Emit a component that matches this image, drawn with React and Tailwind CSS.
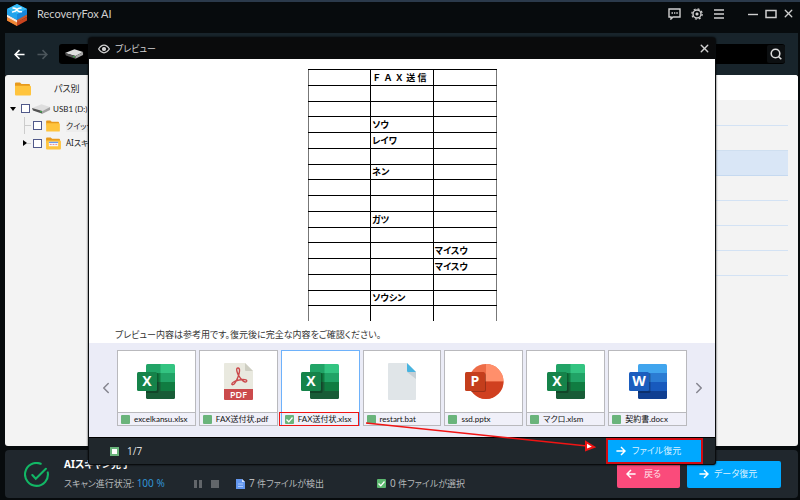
import React from "react";
import { ChevronLeft, ChevronRight, X } from "lucide-react";

function Logo() {
  return (
    <svg viewBox="0 0 22 22" className="size-[22px] shrink-0" aria-hidden="true">
      <path d="M1 13 L11 18 L21 13 V16.500 L11 22 L1 16.500Z" fill="#c9441f" />
      <path d="M1 13 L11 18 V22 L1 16.500Z" fill="#f08a35" />
      <path d="M1 10 L11 15 L21 10 V13 L11 18.500 L1 13Z" fill="#c8562c" />
      <path d="M1 10 L11 15 V18.500 L1 13Z" fill="#fbe9dc" />
      <path d="M1 5 L11 0 L21 5 V10.500 L11 16 L1 10.500Z" fill="#1787dc" />
      <path d="M1 5 L11 0 L21 5 L11 10Z" fill="#35baf5" />
      <path d="M1 5 L11 10 V16 L1 10.500Z" fill="#22a3ec" />
      <path d="M7 4 Q10.500 4.500 11 5.700 Q12 4 15 4 M6.500 8 Q10 7.500 11 5.700 Q12 8 15.500 7.800" stroke="#fff" strokeWidth="1.500" fill="none" strokeLinecap="round" />
    </svg>
  );
}

function Folder({ app }) {
  return (
    <svg viewBox="0 0 16 14" className={app ? "h-[13px] w-[15px] shrink-0" : "h-full w-full"} aria-hidden="true">
      <path d="M0 1.500 Q0 .5 1 .5 H5 L6.500 2 H14 Q15 2 15 3 V6 H0Z" fill="#e79a1c" />
      <path d="M0 3.800 H15 Q16 3.800 16 4.800 V12.500 Q16 13.500 15 13.500 H1 Q0 13.500 0 12.500Z" fill="#ffc43d" />
      {app && <g><path d="M3 5 H13 V10 H3Z" fill="#f4f6fb" /><path d="M3 5 H13 V6.500 H3Z" fill="#6d9bea" /><path d="M4 8 H6 M7 8 H9 M10 8 H12" stroke="#e58585" /></g>}
    </svg>
  );
}

function Drive() {
  return (
    <svg viewBox="0 0 20 10" className="h-[10px] w-[19px] shrink-0" aria-hidden="true">
      <path d="M0 4 L10 0 L19 3 L11 7Z" fill="#dedede" />
      <path d="M0 4 L11 7 V10 L1 6.500Z" fill="#545454" />
      <path d="M11 7 L19 3 V6 L11 10Z" fill="#a4a4a4" />
      <circle cx="9.500" cy="8" r=".8" fill="#36d444" />
    </svg>
  );
}

function Arrow({ left, className }) {
  return (
    <svg viewBox="0 0 12 12" className={className} fill="none" stroke="currentColor" strokeWidth="1.700" aria-hidden="true">
      <path d={left ? "M11.500 6 H1.500 M6 1.200 L1.200 6 L6 10.800" : "M.5 6 H10.500 M6 1.200 L10.800 6 L6 10.800"} />
    </svg>
  );
}

function OfficeIcon({ kind }) {
  if (kind === "pdf")
    return (
      <svg viewBox="0 0 40 40" className="size-10" aria-hidden="true">
        <path d="M6 2 Q6 1 7 1 H27 L35 9 V28 H6Z" fill="#e9e9df" />
        <path d="M27 1 L35 9 H28 Q27 9 27 8Z" fill="#cecec2" />
        <path d="M6 27 H35 V37 Q35 38 34 38 H7 Q6 38 6 37Z" fill="#cb4a4c" />
        <path d="M20 6 C17.500 6 19 11 21 14 C23 18 27 21 28.500 19.500 C30 17.500 25 17 21 18 C17 18.800 13 21 14 22.500 C15.500 24 18.500 19 20 15 C21.500 11 22.500 6 20 6Z" fill="none" stroke="#cb4a4c" strokeWidth="1.400" />
        <text x="20.500" y="35.500" textAnchor="middle" fontSize="9" fontWeight="600" fill="#fff" className="font-['Open_Sans',sans-serif]">PDF</text>
      </svg>
    );
  if (kind === "bat")
    return (
      <svg viewBox="0 0 40 40" className="size-10" aria-hidden="true">
        <path d="M6 2 Q6 1 7 1 H25 L34 10 V37 Q34 38 33 38 H7 Q6 38 6 37Z" fill="#e0e5e8" />
        <path d="M25 10 L34 17 V10Z" fill="#c5cfd5" />
        <path d="M25 1 L34 10 H26 Q25 10 25 9Z" fill="#48b4e0" />
      </svg>
    );
  if (kind === "P")
    return (
      <svg viewBox="0 0 40 40" className="size-10" aria-hidden="true">
        <circle cx="22" cy="19.500" r="17.500" fill="#ed6c47" />
        <path d="M22 2 A17.500 17.500 0 0 1 39.500 19.500 H22Z" fill="#ff8f6b" />
        <path d="M4.500 19.500 A17.500 17.500 0 0 0 39.500 19.500Z" fill="#d04020" />
        <path d="M5 11 H20 Q22 11 22 13 V28 Q22 30 20 30 H7Z" fill="#000" opacity=".25" />
        <rect x="1" y="10" width="20" height="19" rx="1.500" fill="#c43e1c" />
        <text x="11" y="24" textAnchor="middle" fontSize="14" fontWeight="700" fill="#fff" className="font-['Open_Sans',sans-serif]">P</text>
      </svg>
    );
  const word = kind === "W";
  const c = word
    ? ["#41a5ee", "#41a5ee", "#2b7cd3", "#2b7cd3", "#185abd", "#185abd", "#103f91", "#103f91", "#1b5dbe"]
    : ["#21a366", "#33c481", "#107c41", "#21a366", "#185c37", "#107c41", "#185c37", "#185c37", "#15834a"];
  return (
    <svg viewBox="0 0 40 40" className="size-10" aria-hidden="true">
      <clipPath id={"sheet" + kind}><rect x="10" y="2" width="29" height="35" rx="1.500" /></clipPath>
      <g clipPath={"url(#sheet" + kind + ")"}>
        {[0, 1, 2, 3].map((r) => (
          <g key={r}>
            <rect x="10" y={2 + r * 9} width="15" height="9" fill={c[r * 2]} />
            <rect x="24.500" y={2 + r * 9} width="15" height="9" fill={c[r * 2 + 1]} />
          </g>
        ))}
        <rect x="8" y="11" width="14.500" height="20" rx="1.500" fill="#000" opacity=".25" />
      </g>
      <rect x="1" y="10" width="20" height="19" rx="1.500" fill={c[8]} />
      <text x="11" y="24" textAnchor="middle" fontSize="14" fontWeight="700" fill="#fff" className="font-['Open_Sans',sans-serif]">{kind}</text>
    </svg>
  );
}

const files = [
  ["excelkansu.xlsx", "X"],
  ["FAX送付状.pdf", "pdf"],
  ["FAX送付状.xlsx", "X"],
  ["restart.bat", "bat"],
  ["ssd.pptx", "P"],
  ["マクロ.xlsm", "X"],
  ["契約書.docx", "W"],
];

const checkBox = "size-[9px] shrink-0 appearance-none rounded-[1px] bg-[#6ab47b]";

function FileCard({ name, kind, selected }) {
  return (
    <label className={"relative flex h-[76px] min-w-0 flex-1 flex-col border bg-white " + (selected ? "border-[#6eb2fb]" : "border-[#b9b9bd]")}>
      <span className="flex flex-1 items-center justify-center"><OfficeIcon kind={kind} /></span>
      <span className="flex h-[13px] items-center gap-1 border-t border-[#b9b9bd] bg-[#f0f0f9] pl-[3px] font-['Lato','Noto_Sans_CJK_JP',sans-serif] text-[8px] leading-[12px] text-[#111]">
        <span className="relative flex">
          <input type="checkbox" defaultChecked={selected} className={checkBox} />
          {selected && <svg viewBox="0 0 9 9" className="absolute inset-0 size-[9px]" aria-hidden="true"><path d="M1.500 4.500 L3.800 6.800 L7.500 2.500" fill="none" stroke="#fff" strokeWidth="1.300" /></svg>}
        </span>
        <span className="whitespace-nowrap">{name}</span>
      </span>
      {selected && <span className="pointer-events-none absolute -bottom-px -left-[3px] right-0 h-[14px] border border-[#f01414]" />}
    </label>
  );
}

const sheet = [
  ["", "Ｆ Ａ Ｘ 送 信", ""], ["", "", ""], ["", "", ""], ["", "ソウ", ""],
  ["", "レイワ", ""], ["", "", ""], ["", "ネン", ""], ["", "", ""],
  ["", "", ""], ["", "ガツ", ""], ["", "", ""], ["", "", "マイスウ"],
  ["", "", "マイスウ"], ["", "", ""], ["", "ソウシン", ""], ["", "", ""],
];

function Preview() {
  return (
    <section role="dialog" aria-label="プレビュー" className="absolute top-[35px] right-[84px] bottom-[35px] left-[88px] flex flex-col rounded-t-[4px] rounded-b-[3px] border border-[#090c0e] bg-[#20272c] shadow-[0_0_2px_#000]">
      <header className="flex h-[21px] shrink-0 items-center bg-[#0a0b0c] pr-[4px] pl-[9px] text-[#d2d2d2]">
        <svg viewBox="0 0 12 10" className="h-[10px] w-[12px]" fill="none" stroke="currentColor" strokeWidth="1.200" aria-hidden="true">
          <path d="M.6 5 Q3 1.200 6 1.200 T11.400 5 Q9 8.800 6 8.800 T.6 5Z" /><circle cx="6" cy="5" r="1.500" fill="currentColor" />
        </svg>
        <h2 className="ml-[5px] text-[9px] leading-[12px]">プレビュー</h2>
        <button aria-label="閉じる" className="ml-auto"><X size={13} strokeWidth={2.500} /></button>
      </header>
      <div className="flex min-h-0 flex-1 flex-col bg-white">
        <div className="flex flex-1 justify-center pt-[10px]">
          <table className="h-[252px] w-[189px] table-fixed border-collapse self-start border-x border-[#777] text-[9px] leading-[11px] font-bold text-black">
            <tbody>
              {sheet.map((row, i) => (
                <tr key={i} className="border-t border-black">
                  {row.map((cell, j) => (
                    <td key={j} className={"p-0 pl-px whitespace-nowrap " + (j ? "border-l border-black " : "") + (i ? "" : "[font-feature-settings:normal]")}>
                      <div className="h-[11px]">{cell}</div>
                    </td>
                  ))}
                </tr>
              ))}
            </tbody>
          </table>
        </div>
        <p className="mb-[1px] pl-[26px] text-[9px] leading-[14px] text-[#333]">プレビュー内容は参考用です。復元後に完全な内容をご確認ください。</p>
      </div>
      <div className="flex h-[94px] shrink-0 items-center bg-[#ebecf7] pb-[4px]">
        <button aria-label="前へ" className="flex w-[28px] items-center justify-center pl-[5px] text-[#85858f]"><ChevronLeft size={18} strokeWidth={2} /></button>
        <div className="flex min-w-0 flex-1 gap-[3px]">
          {files.map(([name, kind], i) => <FileCard key={i} name={name} kind={kind} selected={i === 2} />)}
        </div>
        <button aria-label="次へ" className="flex w-[28px] items-center justify-center pr-[5px] text-[#85858f]"><ChevronRight size={18} strokeWidth={2} /></button>
      </div>
      <footer className="flex h-[27px] shrink-0 items-center border-t border-black pr-[12px] pl-[21px]">
        <label className="flex items-center gap-2 text-[10px] leading-[12px] text-[#ddd]">
          <input type="checkbox" className="size-[9px] appearance-none border-2 border-[#6ab47b] bg-white" />1/7
        </label>
        <button className="ml-auto flex h-[26px] w-[97px] items-center gap-[6px] border-2 border-[#d20a12] bg-[#00a8ff] pl-[8px] text-[9px] leading-[12px] text-[#d9f1ff]">
          <Arrow className="size-[10px] text-white" />ファイル復元
        </button>
      </footer>
      <svg viewBox="0 0 232 32" className="pointer-events-none absolute bottom-[11px] left-[276px] h-[32px] w-[232px]" aria-hidden="true">
        <path d="M1 2 L222 25" stroke="#f01414" strokeWidth="1.500" />
        <path d="M221 21 L229 26 L221 29Z" fill="#fff" stroke="#f01414" strokeWidth="2" />
      </svg>
    </section>
  );
}

function TitleBar() {
  return (
    <header className="flex h-[31px] shrink-0 items-start pr-[5px] pl-[6px] text-[#cfcfcf]">
      <span className="pt-[2px]"><Logo /></span>
      <h1 className="ml-[9px] pt-[5px] font-['Lato',sans-serif] text-[11px] leading-[14px]">RecoveryFox AI</h1>
      <div className="ml-auto flex items-center pt-[5px]">
        <button aria-label="フィードバック">
          <svg viewBox="0 0 13 12" className="h-[12px] w-[13px]" fill="none" stroke="currentColor" strokeWidth="1.400" aria-hidden="true"><path d="M1 1 H12 V9 H5 L3 11 V9 H1Z" /><path d="M3.500 5 H5 M6 5 H7.300 M8.300 5 H9.800" strokeWidth="1.500" /></svg>
        </button>
        <button aria-label="設定" className="ml-[10px]">
          <svg viewBox="0 0 12 12" className="size-[12px]" fill="none" stroke="currentColor" aria-hidden="true"><circle cx="6" cy="6" r="4" strokeWidth="1.400" /><circle cx="6" cy="6" r="1.300" fill="currentColor" strokeWidth=".5" /><circle cx="6" cy="6" r="5.200" strokeWidth="1.200" strokeDasharray="2 2.084" /></svg>
        </button>
        <button aria-label="メニュー" className="ml-[10px]">
          <svg viewBox="0 0 12 12" className="size-[12px]" stroke="currentColor" strokeWidth="1.400" aria-hidden="true"><path d="M1 2 H11 M1 6 H11 M1 10 H11" /></svg>
        </button>
        <button aria-label="最小化" className="ml-[22px]">
          <svg viewBox="0 0 12 12" className="size-[12px]" stroke="currentColor" strokeWidth="1.400" aria-hidden="true"><path d="M1 6.500 H11" /></svg>
        </button>
        <button aria-label="最大化" className="ml-[6px]">
          <svg viewBox="0 0 12 12" className="size-[12px]" fill="none" stroke="currentColor" strokeWidth="1.500" aria-hidden="true"><path d="M1 2.500 H11 V9.500 H1Z" /></svg>
        </button>
        <button aria-label="終了" className="ml-[5px]"><X size={13} strokeWidth={2.500} /></button>
      </div>
    </header>
  );
}

const treeBox = "size-[9px] shrink-0 appearance-none border border-[#50598a] bg-white";

export default function App() {
  return (
    <div className="relative flex h-screen flex-col overflow-hidden border-t-2 border-[#2b3a4b] bg-[#070b0d] pb-[2px] font-['Noto_Sans','Noto_Sans_CJK_JP',sans-serif] [font-feature-settings:'palt']">
      <TitleBar />
      <div className="mr-[2px] ml-[5px] flex min-h-0 flex-1 flex-col">
        <nav className="flex h-[42px] shrink-0 items-center bg-[#18242b] pr-[13px] pl-[9px] text-white">
          <button aria-label="戻る"><Arrow left className="size-[11px]" /></button>
          <button aria-label="進む" className="ml-[12px] text-[#4b555b]"><Arrow className="size-[11px]" /></button>
          <div className="ml-[11px] flex h-[20px] flex-1 items-center rounded-[3px] bg-black pl-[6px]">
            <Drive />
            <button aria-label="検索" className="ml-auto flex size-[18px] items-center justify-center rounded-[2px] bg-[#0c0f11] text-[#ddd]">
              <svg viewBox="0 0 12 12" className="size-[12px]" fill="none" stroke="currentColor" strokeWidth="1.600" aria-hidden="true"><circle cx="5.500" cy="5.500" r="4.300" /><path d="M8.500 8.500 L11.300 11.300" /></svg>
            </button>
          </div>
        </nav>
        <main className="flex min-h-0 flex-1 overflow-hidden rounded-[3px] bg-[#f3f3f3]">
          <aside className="w-[184px] shrink-0 text-[8px] leading-[12px] text-[#222]">
            <div className="flex h-[25px] items-center pt-[2px] pl-[10px]">
              <span className="h-[14px] w-[16px]"><Folder /></span>
              <h2 className="ml-[23px] text-[9px] leading-[14px]">パス別</h2>
            </div>
            <ul>
              <li className="flex h-[17px] items-center pl-[5px]">
                <svg viewBox="0 0 6 4" className="h-[4px] w-[6px]" aria-hidden="true"><path d="M0 0 H6 L3 4Z" fill="#000" /></svg>
                <label className="ml-[5px] flex items-center"><input type="checkbox" className={treeBox} /><span className="ml-[2px] flex"><Drive /></span><span className="ml-[2px] font-['Lato',sans-serif]">USB1 (D:)</span></label>
              </li>
              <li className="flex h-[17px] items-center pl-[19px]">
                <span className="h-full w-px bg-[#ccc]" /><span className="h-px w-[6px] bg-[#ccc]" />
                <label className="ml-[2px] flex flex-1 items-center"><input type="checkbox" className={treeBox} /><span className="ml-[4px] h-[12px] w-[14px]"><Folder /></span><span className="ml-[6px] flex-1 bg-[#ededed] whitespace-nowrap">クイックスキャン</span></label>
              </li>
              <li className="flex h-[18px] items-center pl-[18px]">
                <svg viewBox="0 0 4 6" className="h-[6px] w-[4px]" aria-hidden="true"><path d="M0 0 L4 3 L0 6Z" fill="#000" /></svg><span className="h-px w-[4px] bg-[#ccc]" />
                <label className="ml-[2px] flex items-center"><input type="checkbox" className={treeBox} /><span className="ml-[4px] flex"><Folder app /></span><span className="ml-[5px] whitespace-nowrap">AIスキャン</span></label>
              </li>
            </ul>
          </aside>
          <div className="flex-1">
            <div className="h-[25px] bg-white" />
            <ul className="mr-[10px]">
              <li className="h-[26px] border-b border-[#d3e2f4]" />
              <li className="h-[25px] border-b border-[#cfdff0]" />
              <li className="h-[25px] border-b border-[#c5d9f0] bg-[#d9e6f6]" />
              <li className="h-[25px] border-b border-[#d3e2f4]" />
              <li className="h-[25px] border-b border-[#d3e2f4]" />
              <li className="h-[25px] border-b border-[#d3e2f4]" />
              <li className="h-[25px] border-b border-[#d3e2f4]" />
            </ul>
          </div>
        </main>
        <footer className="mt-[4px] flex h-[48px] shrink-0 items-center rounded-[4px] bg-[#20272d] pr-[17px] pl-[19px] text-[#b5b8ba]">
          <svg viewBox="0 0 24 24" className="size-[25px] shrink-0" fill="none" stroke="#12b765" strokeWidth="2" strokeLinecap="round" aria-hidden="true"><path d="M16 1.700 A11 11 0 1 0 22.800 10 M8 12.500 L11.300 16 L21 6.500" /></svg>
          <div className="ml-[15px] flex-1">
            <h2 className="text-[10px] leading-[14px] font-bold text-white">AIスキャン完了</h2>
            <div className="mt-[5px] flex items-center text-[9px] leading-[14px] whitespace-nowrap">
              <p className="w-[130px]">スキャン進行状況: <span className="text-[10px] text-[#3194d4]">100 %</span></p>
              <button aria-label="一時停止" className="flex h-[8px] w-[8px] justify-between"><span className="h-full w-[3px] bg-[#62666a]" /><span className="h-full w-[3px] bg-[#62666a]" /></button>
              <button aria-label="停止" className="ml-[9px] size-[8px] bg-[#62666a]" />
              <svg viewBox="0 0 9 10" className="ml-[17px] h-[10px] w-[9px]" aria-hidden="true"><path d="M0 0 H6 L9 3 V10 H0Z" fill="#6397ef" /><path d="M6 0 L9 3 H6Z" fill="#d4e3ff" /><path d="M2 5 H7 M2 7.500 H7" stroke="#a9c7fa" /></svg>
              <p className="ml-[4px] w-[128px]"><span className="text-[10px]">7</span> 件ファイルが検出</p>
              <svg viewBox="0 0 9 9" className="size-[9px]" aria-hidden="true"><rect width="9" height="9" rx="1" fill="#5cb86f" /><path d="M1.500 4.500 L3.800 6.800 L7.500 2.500" fill="none" stroke="#fff" strokeWidth="1.300" /></svg>
              <p className="ml-[4px]"><span className="text-[10px]">0</span> 件ファイルが選択</p>
            </div>
          </div>
          <button className="flex h-[27px] w-[63px] items-center gap-[8px] rounded-[2px] bg-[#fa4b7b] pl-[9px] text-[9px] text-[#ffe0e8]"><Arrow left className="size-[10px] text-white" />戻る</button>
          <button className="ml-[7px] flex h-[27px] w-[94px] items-center gap-[5px] rounded-[2px] bg-[#00a8ff] pl-[12px] text-[9px] text-[#d9f1ff]"><Arrow className="size-[10px] text-white" />データ復元</button>
        </footer>
      </div>
      <Preview />
    </div>
  );
}
